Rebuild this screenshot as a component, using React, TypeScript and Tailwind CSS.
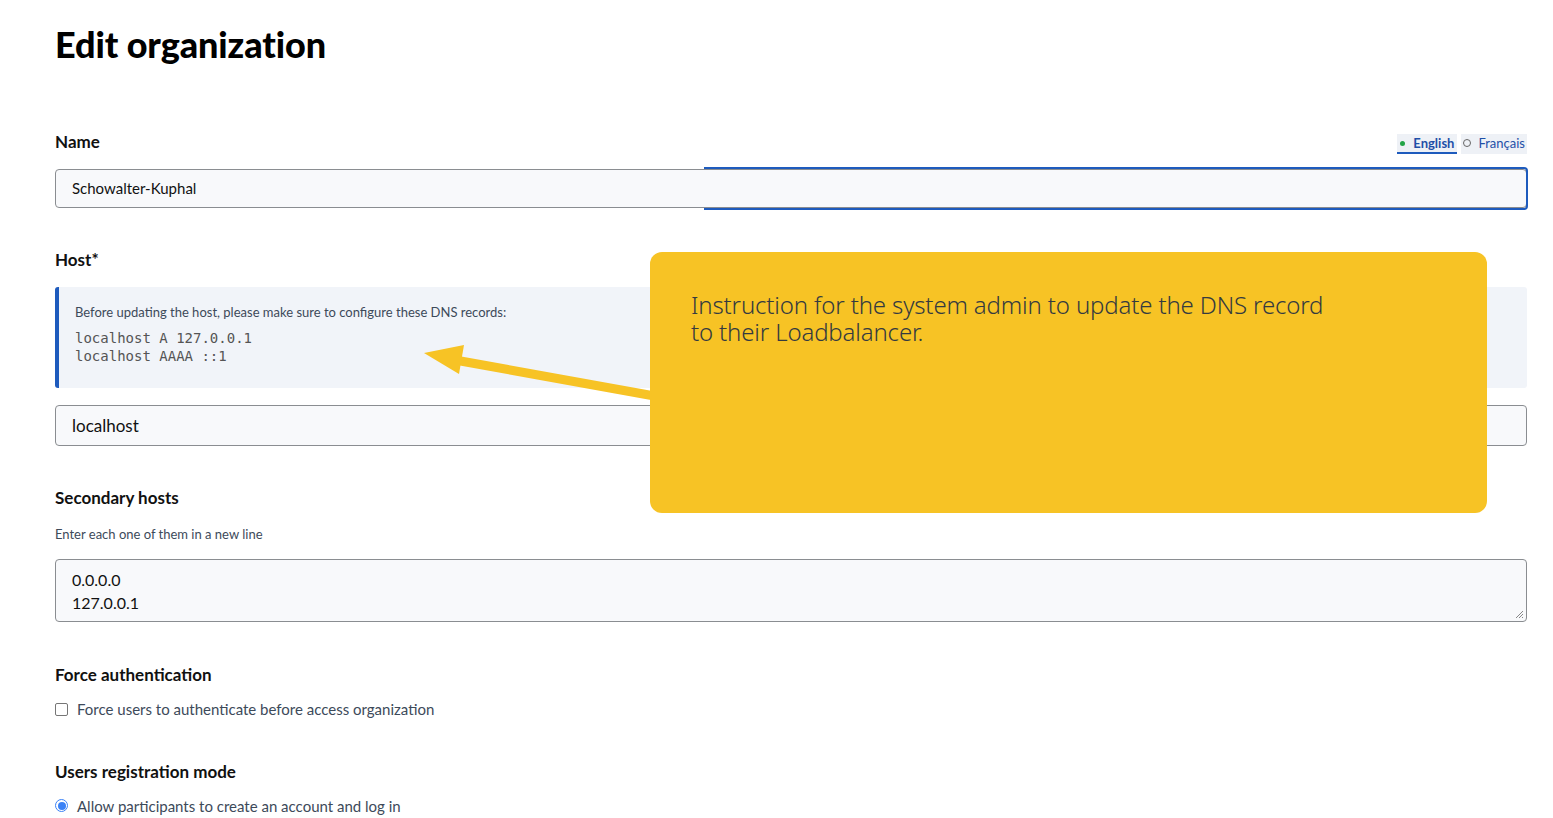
import React from 'react';

const sans = "font-['Lato','Noto_Sans',sans-serif]";

const Label: React.FC<{ children: React.ReactNode }> = ({ children }) => (
  <label className="block text-[17px] font-bold leading-6 text-[#111]">{children}</label>
);

export default function App() {
  return (
    <div className={`relative min-h-[818px] bg-white pl-[55px] pr-[26px] pt-[22px] ${sans}`}>
      <h1 className="text-[36px] font-black leading-[44px] text-black tracking-[-0.1px]">Edit organization</h1>

      {/* Name */}
      <div className="mt-[64px]">
        <div className="flex items-end justify-between">
          <Label>Name</Label>
          <div className="flex items-center gap-[4px] text-[13px] leading-[18px]">
            <span className="flex items-center gap-[8px] border-b-2 border-[#1e5bbd] bg-[#eef1f6] px-[3px] font-bold text-[#1e4fa8]">
              <span className="h-[5px] w-[5px] rounded-full bg-[#22a447]" />
              English
            </span>
            <span className="flex items-center gap-[7px] bg-[#eef1f6] px-[2px] pb-[2px] text-[#1e4fa8]">
              <span className="h-[8px] w-[8px] rounded-full border border-[#666]" />
              Français
            </span>
          </div>
        </div>
        <div className="relative mt-[15px]">
          <div className="flex h-[39px] items-center rounded-[4px] border border-[#8a8d91] bg-[#f8f9fb] px-[16px] text-[15px] text-[#111]">
            Schowalter-Kuphal
          </div>
          <div className="pointer-events-none absolute left-[649px] right-[-1px] top-[-2px] bottom-[-2px] rounded-r-[4px] border-2 border-l-0 border-[#1e5bbd]" />
        </div>
      </div>

      {/* Host */}
      <div className="mt-[40px]">
        <Label>Host*</Label>
        <div className="mt-[15px] h-[101px] rounded-[3px] border-l-[4px] border-[#1e5bbd] bg-[#f1f4f9] pl-[16px] pt-[16px]">
          <p className="text-[13px] leading-[18px] text-[#3d4a5a]">Before updating the host, please make sure to configure these DNS records:</p>
          <pre className="mt-[8px] font-['DejaVu_Sans_Mono',monospace] text-[14px] leading-[18px] text-[#555]">
{`localhost A 127.0.0.1
localhost AAAA ::1`}
          </pre>
        </div>
        <div className="mt-[17px] flex h-[41px] items-center rounded-[4px] border border-[#8a8d91] bg-[#f8f9fb] px-[16px] text-[17px] text-[#111]">
          localhost
        </div>
      </div>

      {/* Secondary hosts */}
      <div className="mt-[40px]">
        <Label>Secondary hosts</Label>
        <p className="mt-[15px] text-[13px] leading-[18px] text-[#3d4a5a]">Enter each one of them in a new line</p>
        <div className="relative mt-[16px] h-[63px] rounded-[4px] border border-[#8a8d91] bg-[#f8f9fb] px-[16px] pt-[8px] text-[16px] leading-[23px] text-[#111]">
          <div>0.0.0.0</div>
          <div>127.0.0.1</div>
          <svg className="absolute bottom-[2px] right-[2px]" width="9" height="9" viewBox="0 0 9 9">
            <path d="M8 1L1 8M8 4L4 8M8 7L7 8" stroke="#888" strokeWidth="1" />
          </svg>
        </div>
      </div>

      {/* Force authentication */}
      <div className="mt-[41px]">
        <Label>Force authentication</Label>
        <label className="mt-[11px] flex items-center gap-[9px] text-[15px] text-[#3d4a5a]">
          <span className="h-[13px] w-[13px] rounded-[2px] border border-[#767676] bg-white" />
          Force users to authenticate before access organization
        </label>
      </div>

      {/* Users registration mode */}
      <div className="mt-[39px]">
        <Label>Users registration mode</Label>
        <label className="mt-[11px] flex items-center gap-[9px] text-[15px] text-[#3d4a5a]">
          <span className="flex h-[13px] w-[13px] items-center justify-center rounded-full border border-[#3b82f6] bg-white">
            <span className="h-[8px] w-[8px] rounded-full bg-[#3b82f6]" />
          </span>
          Allow participants to create an account and log in
        </label>
      </div>

      {/* Annotation overlay */}
      <svg className="pointer-events-none absolute left-0 top-0" width="700" height="420" viewBox="0 0 700 420">
        <line x1="455" y1="360" x2="660" y2="397" stroke="#f7c325" strokeWidth="9" />
        <polygon points="424,353 464,345 459,374" fill="#f7c325" />
      </svg>
      <div className="absolute left-[650px] top-[252px] h-[261px] w-[837px] rounded-[12px] bg-[#f7c325] pl-[41px] pt-[39px] font-['Noto_Sans',sans-serif] text-[24px] font-light leading-[27px] tracking-[-0.15px] text-[#343a40]">
        Instruction for the system admin to update the DNS record
        <br />
        to their Loadbalancer.
      </div>
    </div>
  );
}
